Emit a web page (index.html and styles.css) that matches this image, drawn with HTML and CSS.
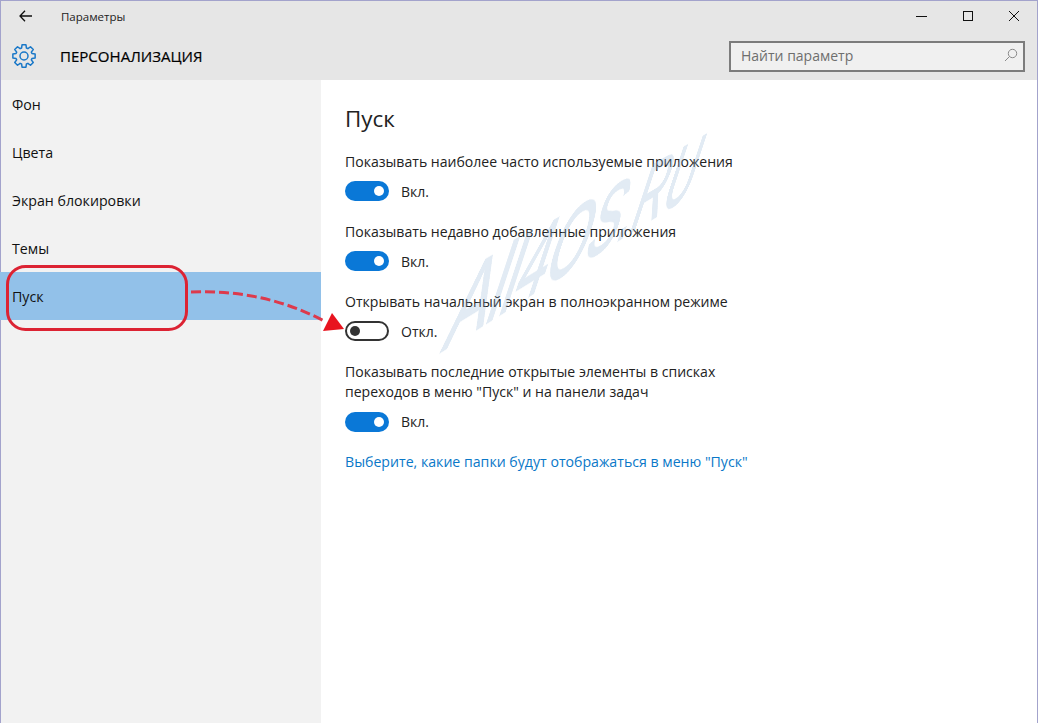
FILE: index.html
```html
<!DOCTYPE html>
<html lang="ru">
<head>
<meta charset="utf-8">
<title>Параметры</title>
<link rel="stylesheet" href="styles.css">
</head>
<body>
<div class="window">
  <header class="header">
    <div class="titlebar">
      <svg class="back" width="14" height="12" viewBox="0 0 14 12"><path d="M6 .8 1 6l5 5.200M1 6h12" fill="none" stroke="#111" stroke-width="1.300"/></svg>
      <span class="app-title">Параметры</span>
      <div class="win-controls">
        <svg width="46" height="12" viewBox="0 0 46 12" class="ctl"><path d="M17 6.500h11" stroke="#111" stroke-width="1"/></svg>
        <svg width="46" height="12" viewBox="0 0 46 12" class="ctl"><rect x="18.500" y="1.500" width="9" height="9" fill="none" stroke="#111" stroke-width="1"/></svg>
        <svg width="46" height="12" viewBox="0 0 46 12" class="ctl"><path d="M18 1l10 10M28 1 18 11" stroke="#111" stroke-width="1"/></svg>
      </div>
    </div>
    <div class="subbar">
      <svg class="gear" width="24" height="24" viewBox="0 0 24 24"><path d="M23.130 10.040V13.960L19.940 14.430 19.330 15.900 21.260 18.480 18.480 21.260 15.900 19.330 14.430 19.940 13.960 23.130H10.040L9.570 19.940 8.100 19.330 5.520 21.260 2.740 18.480 4.670 15.900 4.060 14.430 .87 13.960V10.040L4.060 9.570 4.670 8.100 2.740 5.520 5.520 2.740 8.100 4.670 9.570 4.060 10.040 .87H13.960L14.430 4.060 15.900 4.670 18.480 2.740 21.260 5.520 19.330 8.100 19.940 9.570Z" fill="none" stroke="#1a78c8" stroke-width="1.500" stroke-linejoin="round"/><circle cx="12" cy="12" r="4" fill="none" stroke="#1a78c8" stroke-width="1.500"/></svg>
      <h1 class="section-title">ПЕРСОНАЛИЗАЦИЯ</h1>
      <div class="search">
        <span class="search-text">Найти параметр</span>
        <svg width="14" height="14" viewBox="0 0 14 14"><circle cx="8.500" cy="5.500" r="4.200" fill="none" stroke="#8a8a8a" stroke-width="1"/><path d="M5.500 8.500 1 13" stroke="#8a8a8a" stroke-width="1"/></svg>
      </div>
    </div>
  </header>
  <div class="body">
    <nav class="sidebar">
      <a class="nav-item">Фон</a>
      <a class="nav-item">Цвета</a>
      <a class="nav-item">Экран блокировки</a>
      <a class="nav-item">Темы</a>
      <a class="nav-item active">Пуск</a>
    </nav>
    <main class="content">
      <h2 class="page-title">Пуск</h2>
      <div class="setting">
        <p class="label">Показывать наиболее часто используемые приложения</p>
        <div class="toggle-row"><span class="toggle on"><i class="knob"></i></span><span class="state">Вкл.</span></div>
      </div>
      <div class="setting">
        <p class="label">Показывать недавно добавленные приложения</p>
        <div class="toggle-row"><span class="toggle on"><i class="knob"></i></span><span class="state">Вкл.</span></div>
      </div>
      <div class="setting">
        <p class="label">Открывать начальный экран в полноэкранном режиме</p>
        <div class="toggle-row"><span class="toggle off"><i class="knob"></i></span><span class="state">Откл.</span></div>
      </div>
      <div class="setting">
        <p class="label">Показывать последние открытые элементы в списках<br>переходов в меню "Пуск" и на панели задач</p>
        <div class="toggle-row"><span class="toggle on"><i class="knob"></i></span><span class="state">Вкл.</span></div>
      </div>
      <a class="link">Выберите, какие папки будут отображаться в меню "Пуск"</a>
    </main>
  </div>
  <div class="watermark">All4OS.RU</div>
  <svg class="annotation" width="1038" height="723" viewBox="0 0 1038 723">
    <rect x="7.500" y="266.500" width="179" height="63" rx="18" fill="none" stroke="#dc2333" stroke-width="3"/>
    <path d="M191 292C240 290 285 300 326 322" fill="none" stroke="#dd3a4c" stroke-width="3" stroke-dasharray="10 4"/>
    <path d="M332 313 344 329 323 331z" fill="#e8141f"/>
  </svg>
</div>
</body>
</html>
```
FILE: styles.css
```css
* { box-sizing: border-box; }
html, body { margin: 0; padding: 0; }
body { width: 1038px; height: 723px; overflow: hidden; background: #fff; font-family: "Open Sans", "Noto Sans", sans-serif; color: #111; }
.window { position: relative; width: 1038px; height: 723px; display: flex; flex-direction: column; border-top: 1px solid #a3a3cc; border-left: 1px solid #a3a3cc; border-right: 1px solid #a3a3cc; }
.header { height: 79px; background: #e6e6e6; display: flex; flex-direction: column; flex: none; }
.titlebar { height: 31px; display: flex; align-items: center; padding: 0 0 1px 18px; }
.back { flex: none; }
.app-title { margin-left: 28px; font-size: 11.500px; color: #222; }
.win-controls { margin-left: auto; display: flex; }
.ctl { display: block; }
.subbar { flex: 1; display: flex; align-items: center; padding: 0 12px 0 11px; }
.gear { flex: none; }
.section-title { margin: 0 0 0 24px; font-size: 15.060px; font-weight: 400; color: #000; -webkit-text-stroke: 0.2px #000; }
.search { margin-left: auto; width: 296px; height: 31px; border: 2px solid #7c7c7c; background: #f0f0f0; display: flex; align-items: center; justify-content: space-between; padding: 0 5px 2px 10px; }
.search-text { font-size: 14px; color: #6e6e6e; }
.body { flex: 1; display: flex; min-height: 0; }
.sidebar { width: 320px; flex: none; background: #f2f2f2; display: flex; flex-direction: column; }
.nav-item { height: 48px; display: flex; align-items: center; padding-left: 11px; font-size: 14.200px; color: #111; flex: none; }
.nav-item.active { background: #92c1e9; margin-left: -1px; padding-left: 12px; }
.content { flex: 1; padding: 22px 0 0 24px; }
.page-title { margin: 0 0 15.500px; font-size: 22.400px; line-height: 34px; font-weight: 400; color: #222; }
.setting { margin-bottom: 19.500px; }
.label { margin: 0; font-size: 14.070px; line-height: 20.500px; color: #222; }
.toggle-row { display: flex; align-items: center; height: 22px; margin-top: 8px; }
.toggle { width: 44px; height: 20px; border-radius: 10px; display: flex; align-items: center; flex: none; }
.toggle.on { background: #0a78d7; justify-content: flex-end; padding-right: 5px; }
.toggle.off { border: 2px solid #333; padding-left: 3px; background: #fff; }
.knob { display: block; width: 10px; height: 10px; border-radius: 50%; }
.on .knob { background: #fff; }
.off .knob { background: #333; }
.state { margin-left: 12px; font-size: 14px; color: #222; }
.link { display: block; font-size: 14.150px; line-height: 20px; color: #0a78c8; }
.watermark { position: absolute; left: 453px; top: 310px; font-family: "Liberation Sans", sans-serif; font-size: 118px; line-height: 0; color: #8cafd2; opacity: 0.26; -webkit-text-stroke: 2.500px #8cafd2; transform-origin: 0 0; transform: matrix3d(0.552, -0.33, 0, 0.0005, -0.33, 1, 0, 0, 0, 0, 1, 0, 0, 0, 0, 1); white-space: nowrap; pointer-events: none; }
.annotation { position: absolute; left: -1px; top: -1px; pointer-events: none; }
```
